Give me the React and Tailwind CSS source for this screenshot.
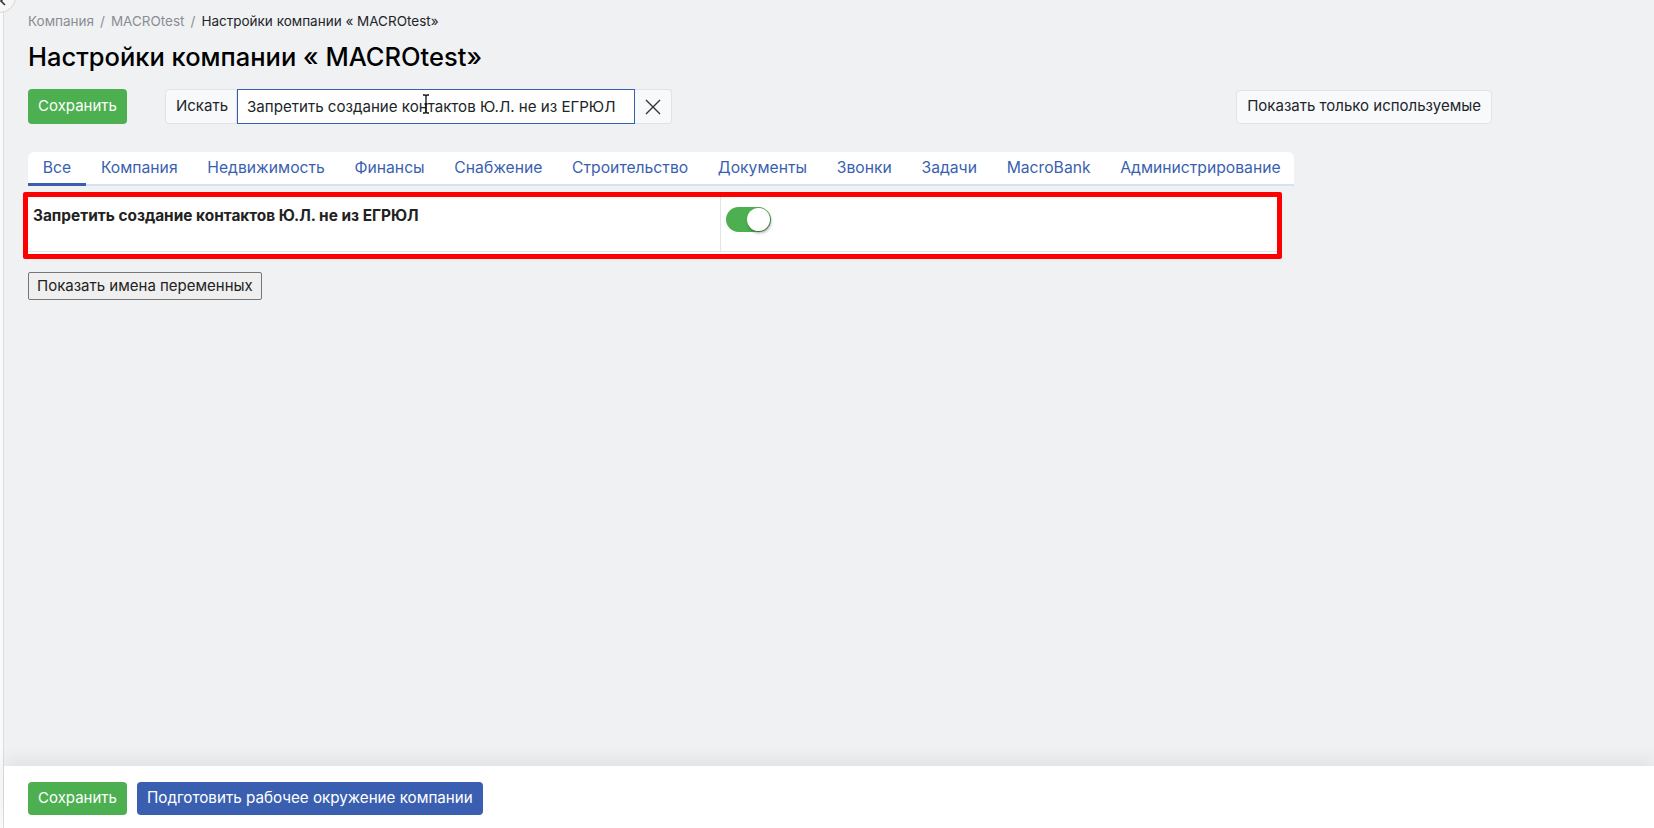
import React, { useState } from 'react';

const tabs = [
  'Все',
  'Компания',
  'Недвижимость',
  'Финансы',
  'Снабжение',
  'Строительство',
  'Документы',
  'Звонки',
  'Задачи',
  'MacroBank',
  'Администрирование',
];

const Toggle = ({ on, onChange }) => (
  <button
    onClick={() => onChange(!on)}
    className={`relative w-[45px] h-[25px] rounded-full ${on ? 'bg-[#4caf50]' : 'bg-[#ccc]'}`}
  >
    <span
      className={`absolute top-[1px] w-[23px] h-[23px] rounded-full bg-white shadow-[1px_2px_3px_rgba(0,0,0,0.35)] ${on ? 'left-[21px]' : 'left-[1px]'}`}
    />
  </button>
);

export default function App() {
  const [active, setActive] = useState(0);
  const [enabled, setEnabled] = useState(true);
  const [query, setQuery] = useState('Запретить создание контактов Ю.Л. не из ЕГРЮЛ');

  return (
    <div
      className="relative flex w-full h-[828px] bg-[#f0f1f3] text-[#212529] overflow-hidden"
      style={{ fontFamily: 'Inter, Roboto, "Noto Sans", sans-serif' }}
    >
      {/* collapse handle */}
      <div className="absolute -left-[16px] -top-[19px] w-[32px] h-[32px] rounded-full bg-[#f7f7f7] border border-[#d6d6d6] flex items-end justify-end pr-[6px] pb-[6px] z-10">
        <svg width="10" height="10" viewBox="0 0 10 10" fill="none" stroke="#333" strokeWidth="1.6">
          <path d="M6 1 L2 5 L6 9" />
        </svg>
      </div>

      <div className="w-[4px] bg-[#fafafa] border-r border-[#dcdde0] shrink-0" />

      <div className="flex flex-col flex-1 min-w-0">
        <div className="flex-1 pl-[24px] pt-[12px]">
          {/* breadcrumb */}
          <div className="flex items-center gap-[6px] text-[13.5px] leading-[18px] text-[#8a8d93]">
            <span>Компания</span>
            <span>/</span>
            <span>MACROtest</span>
            <span>/</span>
            <span className="text-[#212529]">Настройки компании « MACROtest»</span>
          </div>

          <h1 className="mt-[12px] text-[25.5px] leading-[30px] font-medium text-black">
            Настройки компании « MACROtest»
          </h1>

          {/* toolbar */}
          <div className="mt-[17px] flex items-center w-[1464px]">
            <button className="h-[35px] w-[99px] rounded-[4px] bg-[#4caf50] text-white text-[15px]">
              Сохранить
            </button>
            <div className="ml-[38px] flex h-[35px]">
              <span className="flex items-center px-[10px] w-[72px] bg-[#f8f9fa] border border-[#dfe2e6] rounded-l-[4px] text-[15px]">
                Искать
              </span>
              <div className="relative">
                <input
                  value={query}
                  onChange={(e) => setQuery(e.target.value)}
                  className="w-[398px] h-full px-[9px] border border-[#3a5fb0] bg-white text-[15.1px] text-[#212529] outline-none"
                />
                {/* mouse text cursor */}
                <svg
                  className="absolute left-[185px] top-[5px] pointer-events-none"
                  width="8"
                  height="20"
                  viewBox="0 0 8 20"
                  fill="none"
                  stroke="#111"
                  strokeWidth="1.3"
                >
                  <path d="M1 1 H3 Q4 1 4 3 V17 Q4 19 3 19 H1 M7 1 H5 Q4 1 4 3 M4 17 Q4 19 5 19 H7 M2.5 10 H5.5" />
                </svg>
              </div>
              <button
                onClick={() => setQuery('')}
                className="w-[37px] flex items-center justify-center bg-[#f8f9fa] border border-l-0 border-[#dfe2e6] rounded-r-[4px]"
              >
                <svg width="16" height="16" viewBox="0 0 16 16" stroke="#333" strokeWidth="1.4">
                  <path d="M1 1 L15 15 M15 1 L1 15" />
                </svg>
              </button>
            </div>
            <button className="ml-auto h-[34px] px-[10px] bg-[#f8f9fa] border border-[#e2e4e7] rounded-[4px] text-[15px]">
              Показать только используемые
            </button>
          </div>

          {/* tabs */}
          <div className="mt-[28px] w-[1266px] flex bg-white rounded-t-[6px] border-b-[2px] border-[#d6e1f1]">
            {tabs.map((t, i) => (
              <button
                key={t}
                onClick={() => setActive(i)}
                className={`h-[34px] px-[14.85px] -mb-[2px] text-[15.7px] text-[#3a5fb0] border-b-[3px] ${
                  active === i ? 'border-[#3a5fb0]' : 'border-transparent'
                }`}
              >
                {t}
              </button>
            ))}
          </div>

          {/* highlighted setting */}
          <div className="mt-[6px] -ml-[5px] w-[1259px] border-[5px] border-[#ff0000] rounded-[2px] bg-white">
            <div className="flex h-[55px] border-b border-[#e3e4e6] mb-[2px]">
              <div className="w-[693px] border-r border-[#e3e4e6] pl-[5px] pt-[7px] text-[15.4px] font-bold text-[#222]">
                Запретить создание контактов Ю.Л. не из ЕГРЮЛ
              </div>
              <div className="pl-[5px] pt-[10px]">
                <Toggle on={enabled} onChange={setEnabled} />
              </div>
            </div>
          </div>

          <button className="mt-[13px] h-[28px] px-[8px] bg-[#efefef] border border-[#767676] rounded-[2px] text-[15px] text-[#222]">
            Показать имена переменных
          </button>
        </div>

        {/* footer */}
        <div className="relative h-[62px] bg-white pl-[24px] pt-[16px] flex items-start gap-[10px] shadow-[0_-8px_16px_rgba(0,0,0,0.06)]">
          <button className="h-[33px] w-[99px] rounded-[4px] bg-[#4caf50] text-white text-[15px]">
            Сохранить
          </button>
          <button className="h-[33px] px-[10px] rounded-[4px] bg-[#3a5fb0] text-white text-[15.2px]">
            Подготовить рабочее окружение компании
          </button>
        </div>
      </div>
    </div>
  );
}
